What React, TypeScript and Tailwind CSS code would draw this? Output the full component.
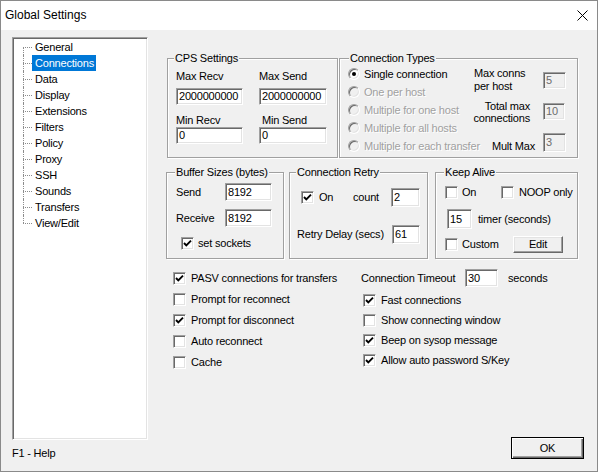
import React from "react";

const sunken =
  "border border-t-[#a0a0a0] border-l-[#a0a0a0] border-b-white border-r-white shadow-[inset_1px_1px_0_#696969,inset_-1px_-1px_0_#e3e3e3]";
const raised =
  "border border-t-white border-l-white border-b-[#696969] border-r-[#696969] shadow-[inset_-1px_-1px_0_#a0a0a0,inset_1px_1px_0_#e3e3e3]";

const treeItems = [
  "General",
  "Connections",
  "Data",
  "Display",
  "Extensions",
  "Filters",
  "Policy",
  "Proxy",
  "SSH",
  "Sounds",
  "Transfers",
  "View/Edit",
];

function Group({
  title,
  className,
  legend,
  children,
}: {
  title: string;
  className: string;
  legend: string;
  children: React.ReactNode;
}) {
  return (
    <fieldset
      className={`border border-[#a0a0a0] shadow-[inset_1px_1px_0_#fff,1px_1px_0_#fff] ${className}`}
    >
      <legend className={`px-[1px] h-[13px] leading-[13px] bg-[#f0f0f0] ${legend}`}>{title}</legend>
      {children}
    </fieldset>
  );
}

function Field({
  value,
  className,
  disabled,
}: {
  value: string;
  className: string;
  disabled?: boolean;
}) {
  return (
    <div
      className={`${sunken} ${className} ${
        disabled ? "bg-[#f0f0f0] text-[#6d6d6d]" : "bg-white"
      } flex items-center pl-[2px] overflow-hidden whitespace-nowrap shrink-0`}
    >
      {value}
    </div>
  );
}

function Check({ checked }: { checked?: boolean }) {
  return (
    <span className={`${sunken} bg-white w-[13px] h-[13px] shrink-0 flex items-center justify-center`}>
      {checked && (
        <svg width="9" height="9" viewBox="0 0 9 9">
          <polyline points="1,4 3.3,6.4 8,1.6" fill="none" stroke="#000" strokeWidth="1.9" />
        </svg>
      )}
    </span>
  );
}

function Radio({ label, checked, disabled }: { label: string; checked?: boolean; disabled?: boolean }) {
  return (
    <div className="h-[18px] flex items-center gap-[4px] whitespace-nowrap">
      <span
        className={`w-[12px] h-[12px] rounded-full border border-t-[#a0a0a0] border-l-[#a0a0a0] border-b-white border-r-white shadow-[inset_1px_1px_0_#696969,inset_-1px_-1px_0_#e3e3e3] flex items-center justify-center shrink-0 ${
          disabled ? "bg-[#f0f0f0]" : "bg-white"
        }`}
      >
        {checked && <span className="w-[4px] h-[4px] rounded-full bg-black" />}
      </span>
      <span className={disabled ? "text-[#a0a0a0] [text-shadow:1px_1px_0_#fff]" : ""}>{label}</span>
    </div>
  );
}

function CheckRow({ label, checked, h }: { label: string; checked?: boolean; h: string }) {
  return (
    <div className={`flex items-center gap-[5px] ${h}`}>
      <Check checked={checked} />
      <span>{label}</span>
    </div>
  );
}

export default function App() {
  return (
    <div className="w-[598px] h-[472px] flex flex-col border border-[#8a8a8a] bg-[#f0f0f0] text-black text-[11px] leading-[13px] tracking-[-0.2px] overflow-hidden font-['Liberation_Sans',Arial,sans-serif]">
      {/* title bar */}
      <div className="h-[29px] bg-white flex items-center justify-between pl-[4px] pr-[9px] shrink-0">
        <span className="text-[12px] tracking-normal">Global Settings</span>
        <svg width="11" height="11" viewBox="0 0 11 11">
          <path d="M0.5 0.5 L10.5 10.5 M10.5 0.5 L0.5 10.5" stroke="#000" strokeWidth="1" />
        </svg>
      </div>

      {/* body */}
      <div className="flex flex-1">
        {/* left: tree + help */}
        <div className="ml-[11px] w-[136px] flex flex-col">
          <div className={`mt-[7px] h-[403px] bg-white ${sunken} pl-[10px] pt-[1px]`}>
            {treeItems.map((t, i) => (
              <div key={t} className="h-[16px] flex items-center">
                <span className="relative w-[9px] h-full shrink-0">
                  <span
                    className={`absolute left-0 border-l border-dotted border-[#8c8c8c] ${
                      i === 0 ? "top-1/2 bottom-0" : i === treeItems.length - 1 ? "top-0 h-1/2" : "top-0 bottom-0"
                    }`}
                  />
                  <span className="absolute left-0 top-1/2 w-[9px] border-t border-dotted border-[#8c8c8c]" />
                </span>
                <span
                  className={`pl-[3px] pr-[2px] h-[16px] leading-[16px] ${
                    t === "Connections" ? "bg-[#0078d7] text-white" : ""
                  }`}
                >
                  {t}
                </span>
              </div>
            ))}
          </div>
          <div className="mt-[7px]">F1 - Help</div>
        </div>

        {/* right: settings */}
        <div className="ml-[18px] mt-[22px] flex-1 flex flex-col pr-[13px] pb-[12px]">
          {/* row 1 */}
          <div className="flex gap-[1px] ml-[1px]">
            <Group title="CPS Settings" className="w-[171px] h-[106px]" legend="ml-[6px]">
              <div className="pl-[8px] flex flex-col">
                <div className="flex mt-[4.5px] h-[13px]">
                  <span className="w-[83px]">Max Recv</span>
                  <span>Max Send</span>
                </div>
                <div className="flex mt-[5.5px]">
                  <Field value="2000000000" className="w-[67px] h-[17px] mr-[16px]" />
                  <Field value="2000000000" className="w-[68px] h-[17px]" />
                </div>
                <div className="flex mt-[8.5px] h-[13px]">
                  <span className="w-[83px]">Min Recv</span>
                  <span className="ml-[3px]">Min Send</span>
                </div>
                <div className="flex mt-[0.5px]">
                  <Field value="0" className="w-[67px] h-[17px] mr-[16px]" />
                  <Field value="0" className="w-[68px] h-[17px]" />
                </div>
              </div>
            </Group>

            <Group title="Connection Types" className="w-[239px] h-[106px]" legend="ml-[9px]">
              <div className="flex">
                <div className="pl-[8px] w-[142px] flex flex-col">
                  <Radio label="Single connection" checked />
                  <Radio label="One per host" disabled />
                  <Radio label="Multiple for one host" disabled />
                  <Radio label="Multiple for all hosts" disabled />
                  <Radio label="Multiple for each transfer" disabled />
                </div>
                <div className="w-[84px] flex flex-col">
                  <div className="flex items-start justify-between">
                    <span className="ml-[-8px] pt-[1.5px] whitespace-nowrap">
                      Max conns
                      <br />
                      per host
                    </span>
                    <Field value="5" disabled className="w-[23px] h-[17px] mt-[7px]" />
                  </div>
                  <div className="flex items-start justify-end mt-[8.5px]">
                    <span className="text-right whitespace-nowrap leading-[11.5px] shrink-0">
                      Total max
                      <br />
                      connections
                    </span>
                    <Field value="10" disabled className="w-[22px] h-[17px] mt-[2px] ml-[13px] mr-[1px]" />
                  </div>
                  <div className="flex items-end justify-end mt-[9px]">
                    <span className="whitespace-nowrap mb-[-1px]">Mult Max</span>
                    <Field value="3" disabled className="w-[23px] h-[19px] ml-[8px]" />
                  </div>
                </div>
              </div>
            </Group>
          </div>

          {/* row 2 */}
          <div className="flex mt-[8px]">
            <Group title="Buffer Sizes (bytes)" className="w-[118px] h-[93px]" legend="ml-[8px]">
              <div className="flex flex-col">
                <div className="flex items-center h-[18px] mt-[4px] pl-[9px]">
                  <span className="w-[49px]">Send</span>
                  <Field value="8192" className="w-[47px] h-[18px]" />
                </div>
                <div className="flex items-center h-[18px] mt-[8px] pl-[9px]">
                  <span className="w-[49px]">Receive</span>
                  <Field value="8192" className="w-[47px] h-[18px]" />
                </div>
                <div className="flex items-center h-[13px] mt-[10px] pl-[14px] gap-[4px]">
                  <Check checked />
                  <span>set sockets</span>
                </div>
              </div>
            </Group>

            <Group title="Connection Retry" className="w-[139px] h-[93px] ml-[5px]" legend="ml-[6px]">
              <div className="flex flex-col">
                <div className="flex items-center h-[19px] mt-[9px] pl-[11px]">
                  <Check checked />
                  <span className="w-[34px] ml-[5px]">On</span>
                  <span className="w-[38px]">count</span>
                  <Field value="2" className="w-[29px] h-[19px]" />
                </div>
                <div className="flex items-center h-[19px] mt-[18px] pl-[7px]">
                  <span className="w-[95px] whitespace-nowrap">Retry Delay (secs)</span>
                  <Field value="61" className="w-[28px] h-[19px]" />
                </div>
              </div>
            </Group>

            <Group title="Keep Alive" className="w-[143px] h-[93px] ml-[7px]" legend="ml-[8px]">
              <div className="flex flex-col">
                <div className="flex items-center h-[13px] mt-[7px] pl-[9px]">
                  <Check />
                  <span className="w-[39px] ml-[4px]">On</span>
                  <Check />
                  <span className="ml-[5px] whitespace-nowrap">NOOP only</span>
                </div>
                <div className="flex items-center h-[20px] mt-[10px] pl-[11px]">
                  <Field value="15" className="w-[25px] h-[20px]" />
                  <span className="ml-[6px] whitespace-nowrap">timer (seconds)</span>
                </div>
                <div className="flex items-center h-[17px] mt-[7px] pl-[9px]">
                  <Check />
                  <span className="w-[51px] ml-[4px]">Custom</span>
                  <button className={`${raised} bg-[#f0f0f0] w-[50px] h-[17px] flex items-center justify-center`}>
                    Edit
                  </button>
                </div>
              </div>
            </Group>
          </div>

          {/* row 3 */}
          <div className="flex mt-[8.5px]">
            <div className="w-[195px] pl-[7px] flex flex-col">
              <CheckRow label="PASV connections for transfers" checked h="h-[21px]" />
              <CheckRow label="Prompt for reconnect" h="h-[21px]" />
              <CheckRow label="Prompt for disconnect" checked h="h-[21px]" />
              <CheckRow label="Auto reconnect" h="h-[21px]" />
              <CheckRow label="Cache" h="h-[21px]" />
            </div>
            <div className="flex flex-col">
              <div className="flex items-center h-[21px]">
                <span className="w-[104px] whitespace-nowrap">Connection Timeout</span>
                <Field value="30" className="w-[33px] h-[18px]" />
                <span className="ml-[10px]">seconds</span>
              </div>
              <div className="flex flex-col pl-[2px] mt-[1.5px]">
                <CheckRow label="Fast connections" checked h="h-[20px]" />
                <CheckRow label="Show connecting window" h="h-[20px]" />
                <CheckRow label="Beep on sysop message" checked h="h-[20px]" />
                <CheckRow label="Allow auto password S/Key" checked h="h-[20px]" />
              </div>
            </div>
          </div>

          <button
            className="mt-auto self-end w-[73px] h-[22px] border border-black bg-[#f0f0f0] shadow-[inset_1px_1px_0_#fff,inset_-1px_-1px_0_#696969,inset_-2px_-2px_0_#a0a0a0] flex items-center justify-center"
          >
            OK
          </button>
        </div>
      </div>
    </div>
  );
}
